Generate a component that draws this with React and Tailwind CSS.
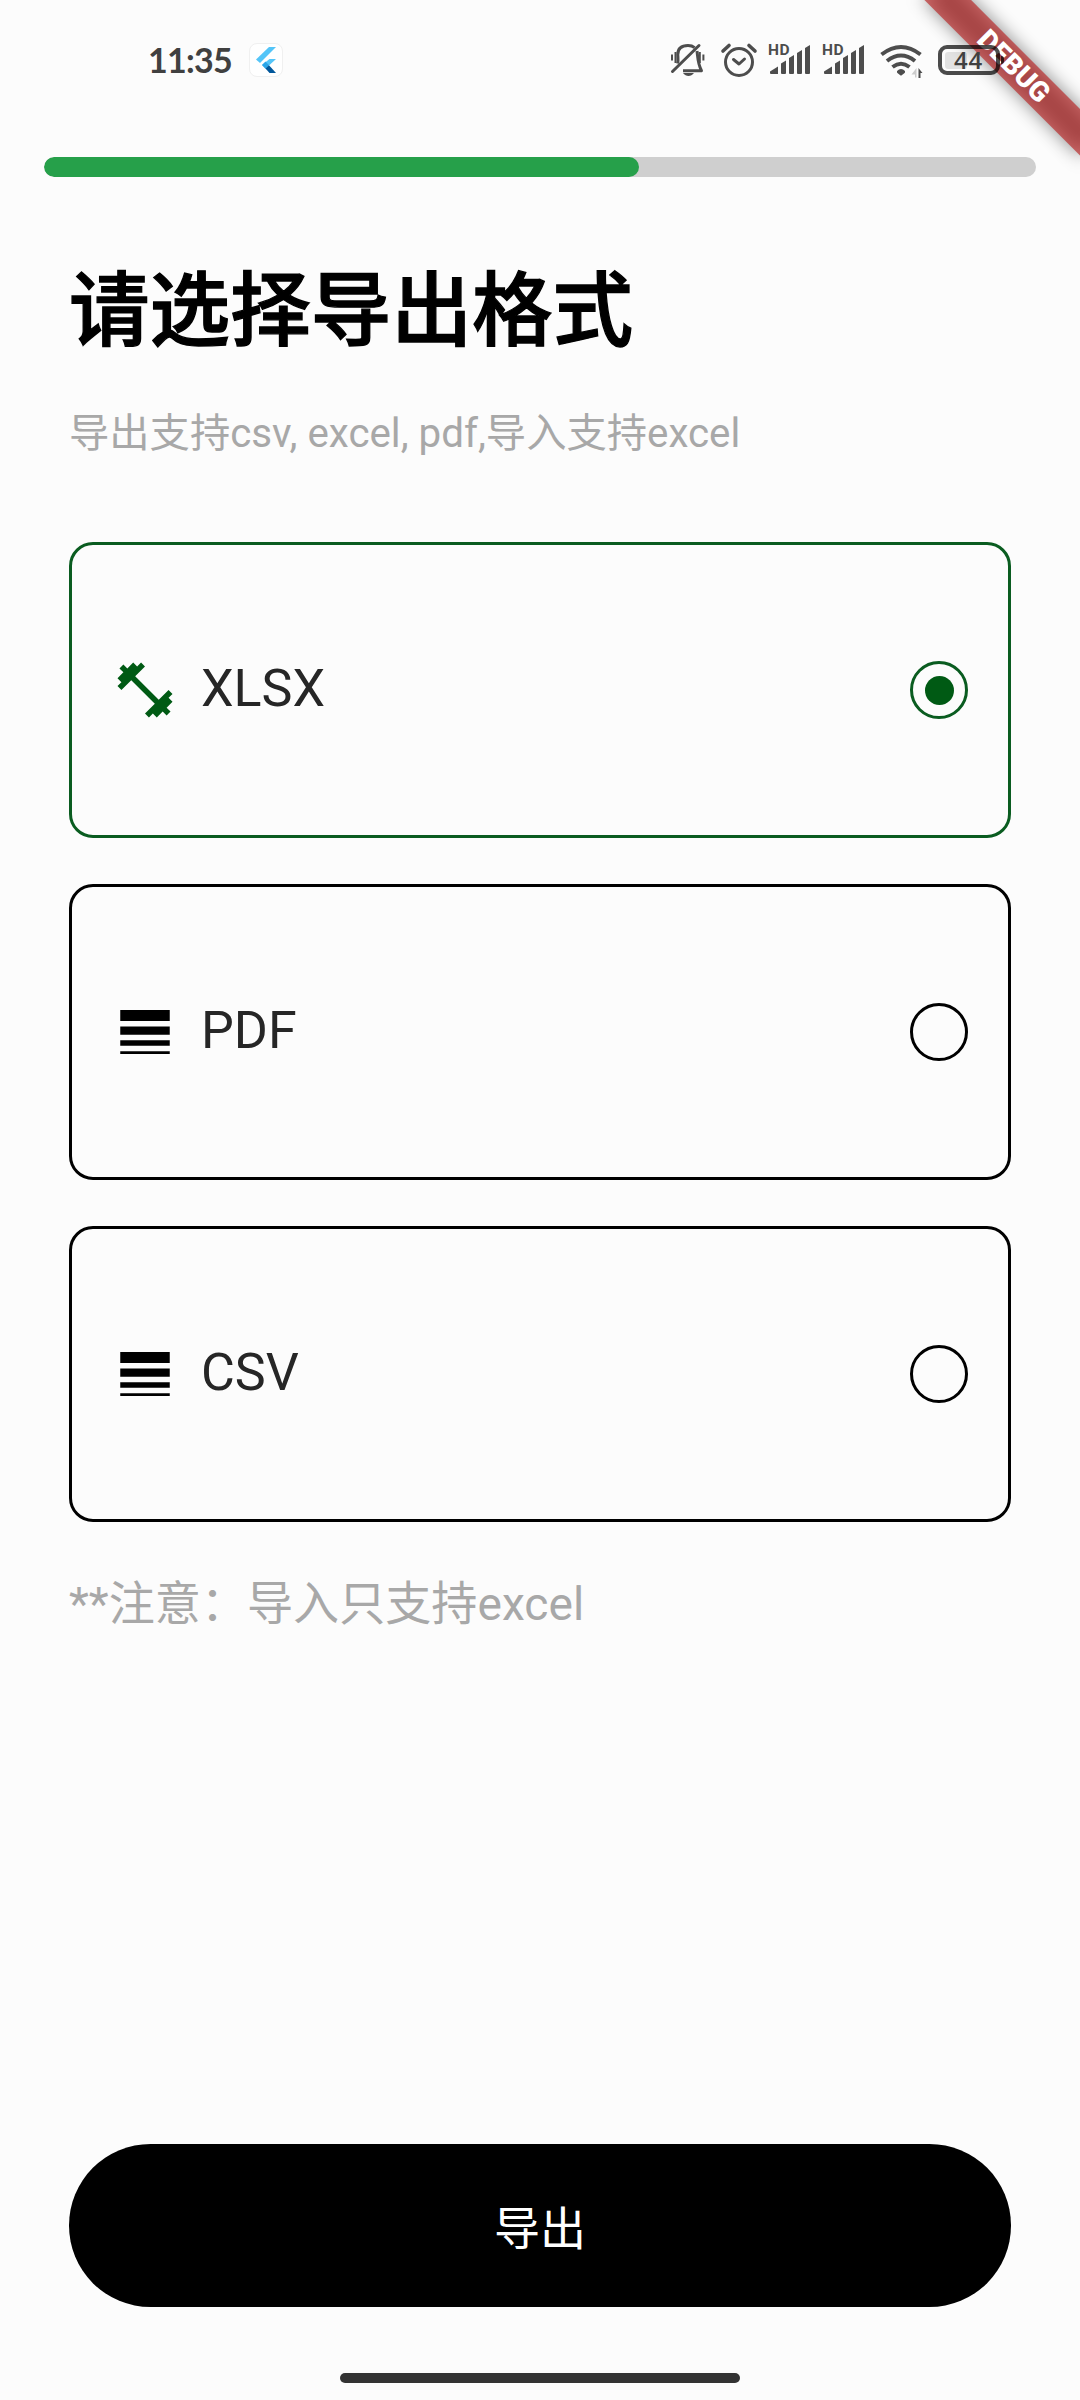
import React from "react";

const SANS = "font-['Roboto','Noto_Sans_CJK_SC',sans-serif]";

function StatusIcons() {
  return (
    <svg className="h-20 w-[288px]" viewBox="650 20 288 80" fill="none" stroke="#4d4d4d" strokeWidth="3">
      {/* muted bell */}
      <path d="M677.6 63.5C678.5 60 677.8 57 677.8 54.5C677.8 49 681 45.500 688 45.500C691 45.500 693 46.300 694.600 47.600M697 51C698 58 697.500 63 701.500 70.700H683" strokeLinejoin="round" />
      <path d="M672.500 71.500L699 45.500" strokeLinecap="round" />
      <path d="M683 73h11c-1.500 2-3.500 3-5.500 3s-4-1-5.500-3z" fill="#4d4d4d" stroke="none" />
      <path d="M672 54.500v6M675.500 52v11M699.800 52v11M703.400 54.500v6" strokeWidth="2" />
      {/* alarm */}
      <circle cx="739" cy="62" r="13.500" />
      <path d="M733.500 59.500l5.500 4.500 5.500-5" strokeLinecap="round" strokeLinejoin="round" />
      <path d="M723 51l6-5.500M755 51l-6-5.500" strokeWidth="3.600" strokeLinecap="round" />
      {/* signal bars */}
      {[770, 824].map((x) => (
        <g key={x} transform={`translate(${x} 0)`} fill="#4d4d4d" stroke="none">
          <path d="M0 71.500L8 66.500V74H1Q0 74 0 73z" />
          <path d="M11 63.500L16 60.500V73Q16 74 15 74H12Q11 74 11 73z" />
          <path d="M19 58L24 55V73Q24 74 23 74H20Q19 74 19 73z" />
          <path d="M27 53L32 50V73Q32 74 31 74H28Q27 74 27 73z" />
          <path d="M35 48L40 45V73Q40 74 39 74H36Q35 74 35 73z" />
          <text x="-2" y="54.800" fontFamily="Roboto" fontWeight="700" fontSize="15.500" letterSpacing="0.500">HD</text>
        </g>
      ))}
      {/* wifi */}
      <path d="M881.500 54.500Q901 39.500 920.500 54.500M887 61Q901 50 915 61M892.500 67Q901 60.500 909.500 67" strokeWidth="4" />
      <path d="M897 71q4-4 8 0q0.500 1.500-1 2.500l-3 2.300-3-2.300q-1.500-1-1-2.500z" fill="#4d4d4d" stroke="none" />
      <path d="M916.500 68v9.500h-1.500v-3h-3.500z" fill="#ccc" stroke="none" />
      <path d="M918.500 68l4 5h-2v5h-2z" fill="#4d4d4d" stroke="none" />
    </svg>
  );
}

function Battery() {
  return (
    <div className="flex h-[30px] items-center">
      <div className="flex h-[30px] w-[62px] items-center rounded-[9px] border-4 border-black/70 pl-[3px]">
        <div className="h-[17px] w-[22px] shrink-0 rounded-[3px] bg-black/10" />
        <span className="-ml-[13px] font-['Open_Sans',sans-serif] text-[24px] leading-none font-semibold tracking-[0.8px] text-[#404040]">44</span>
      </div>
      <div className="ml-px h-2 w-[3px] rounded-r-sm bg-black/70" />
    </div>
  );
}

function FlutterLogo() {
  return (
    <span className="flex size-[34px] items-center justify-center rounded-[8px] border border-[#f0f0f0] bg-white">
      <svg className="h-[26px] w-5" viewBox="0 0 20 26">
        <path d="M13 0h7L4 16l-4-3.500z" fill="#54c5f8" />
        <path d="M13.500 12H20l-7 6.500-3.500 3L6 18z" fill="#54c5f8" />
        <path d="M9.500 14.500l3.500 3.800-3.500 3.500L6 18z" fill="#29a5e8" />
        <path d="M9.500 21.500l3.500-3.200L20 26h-6.500z" fill="#01579b" />
      </svg>
    </span>
  );
}

function DumbbellIcon() {
  return (
    <svg className="size-[66px] shrink-0" viewBox="0 0 24 24" fill="currentColor">
      <path d="M20.57 14.86L22 13.43 20.57 12 17 15.57 8.43 7 12 3.43 10.57 2 9.14 3.43 7.71 2 5.57 4.14 4.14 2.71 2.71 4.14l1.43 1.43L2 7.71l1.43 1.43L2 10.57 3.43 12 7 8.43 15.57 17 12 20.57 13.43 22l1.43-1.43L16.29 22l2.14-2.14 1.43 1.43 1.43-1.43-1.43-1.43L22 16.29z" />
    </svg>
  );
}

function LinesIcon() {
  return (
    <svg className="size-[66px] shrink-0" viewBox="0 0 24 24" fill="currentColor">
      <path d="M3 17h18v-2H3v2zm0 3h18v-1H3v1zm0-7h18v-3H3v3zm0-9v4h18V4H3z" />
    </svg>
  );
}

function Option({ label, icon: Icon, selected }) {
  return (
    <div
      className={`flex h-[296px] items-center rounded-[24px] border-[3px] px-[40px] ${
        selected ? "border-[#0a5c20] text-[#005a14]" : "border-black text-black"
      }`}
    >
      <Icon />
      <span className="ml-[23px] flex-1 pb-[3px] text-[52px] leading-none text-[#262626]">{label}</span>
      <span
        className={`flex size-[58px] items-center justify-center rounded-full border-[3px] ${
          selected ? "border-[#0a5c20]" : "border-black"
        }`}
      >
        {selected && <span className="size-[29px] rounded-full bg-[#005a14]" />}
      </span>
    </div>
  );
}

function DebugBanner() {
  return (
    <div className="absolute top-0 right-0 size-[240px] overflow-hidden">
      <div className="absolute top-[77px] left-[130px] h-[33px] w-[220px] origin-[110px_-77px] rotate-45">
        <div className="absolute inset-0 bg-black/45 blur-[9px]" />
        <div className="relative flex h-full items-center justify-center bg-[#b71c1c]/[0.63] text-[28px] leading-none font-black text-white">
          DEBUG
        </div>
      </div>
    </div>
  );
}

export default function App() {
  return (
    <div className={`relative flex h-[2400px] w-[1080px] flex-col overflow-hidden bg-[#fcfcfc] ${SANS}`}>
      <DebugBanner />

      <header className="relative flex h-[157px] shrink-0 items-start pt-5 pr-[76px] pl-[148px]">
        <div className="flex h-20 flex-1 items-center">
          <span className="w-[101px] pb-px font-['Lato',sans-serif] text-[34px] font-bold tracking-[-0.7px] text-[#404040]">11:35</span>
          <FlutterLogo />
        </div>
        <div className="flex h-20 items-center">
          <StatusIcons />
          <Battery />
        </div>
      </header>

      <div className="mx-11 h-5 shrink-0 overflow-hidden rounded-full bg-[#cfcfcf]">
        <div className="h-full w-3/5 rounded-full bg-[#26a04a]" />
      </div>

      <main className="flex flex-1 flex-col px-[69px]">
        <h1 className="mt-[75px] text-[80.6px] leading-[120px] font-medium text-black [-webkit-text-stroke:1.3px_black]">请选择导出格式</h1>
        <p className="mt-[32px] text-[40.3px] leading-[60px] text-[#a8a8a8]">导出支持csv, excel, pdf,导入支持excel</p>

        <div className="mt-[78px] flex flex-col gap-[46px]">
          <Option label="XLSX" icon={DumbbellIcon} selected />
          <Option label="PDF" icon={LinesIcon} />
          <Option label="CSV" icon={LinesIcon} />
        </div>

        <p className="mt-[47px] text-[46.1px] leading-[70px] text-[#a8a8a8]">**注意：导入只支持excel</p>

        <button className="mt-auto mb-[66px] flex h-[163px] items-center justify-center rounded-full bg-black pt-[8px] text-[46px] text-white">
          导出
        </button>
      </main>

      <div className="mx-auto mb-[17px] h-[10px] w-[400px] shrink-0 rounded-full bg-[#333333]" />
    </div>
  );
}
